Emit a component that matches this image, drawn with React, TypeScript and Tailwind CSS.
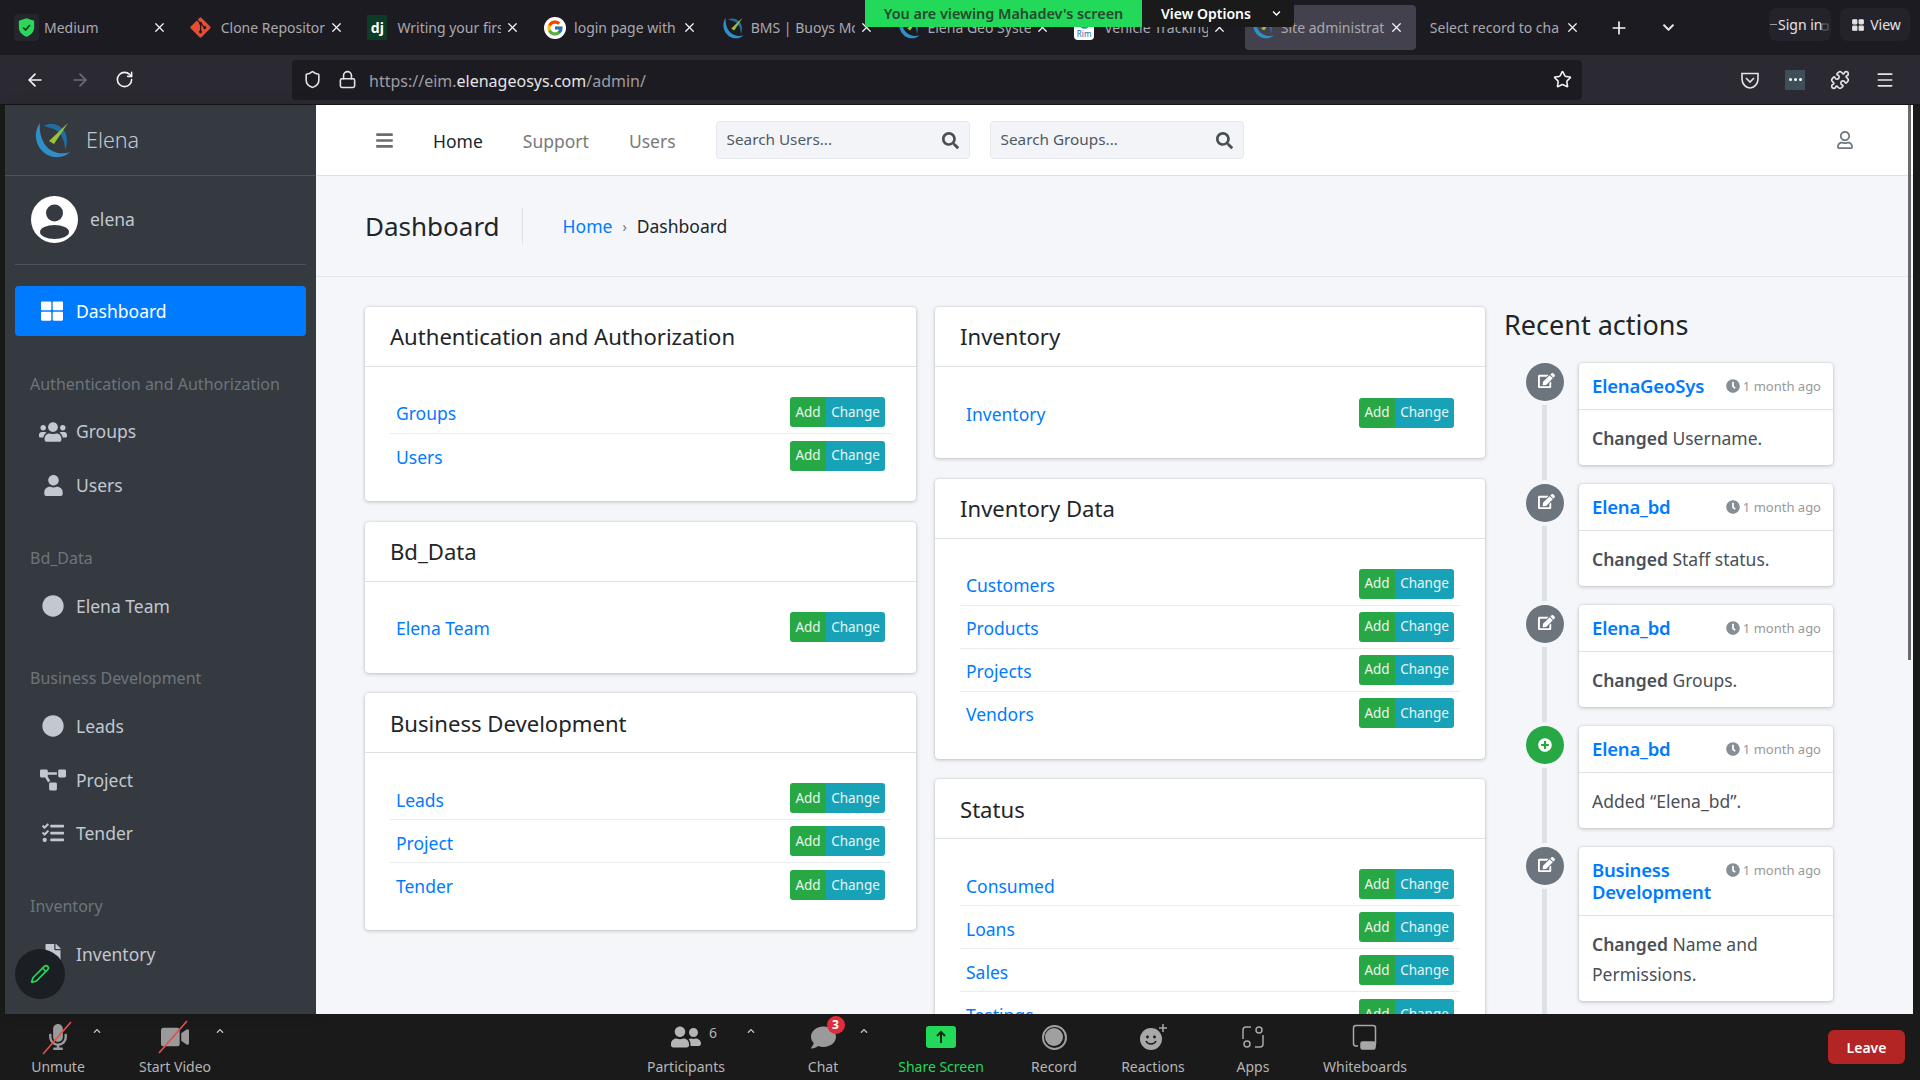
import type { ReactNode } from 'react'
import {
  FaBars, FaChevronDown, FaChevronUp, FaCircle, FaClock, FaComment, FaEdit, FaFile, FaGitAlt, FaMicrophone,
  FaPlusCircle, FaProjectDiagram, FaRegUser, FaSearch, FaTasks, FaThLarge, FaUser, FaUsers,
  FaUserFriends, FaVideo,
} from 'react-icons/fa'
import { FcGoogle } from 'react-icons/fc'
import { ArrowLeft, ArrowRight, LayoutGrid, Lock, Menu, Pencil, Plus, Puzzle, RotateCw, Shield, Square, Star, X } from 'lucide-react'

const font = "font-['Noto_Sans',sans-serif]"

function ElenaLogo({ size = 22 }: { size?: number }) {
  return (
    <svg width={size} height={size} viewBox="0 0 40 40" fill="none">
      <path d="M8 3 C1 12 3 27 14 34 C22 39 32 38 38 32 C30 35 20 33 14 26 C9 20 7 10 8 3Z" fill="#2f8fc6" />
      <path d="M12 6 C18 2 28 4 33 12 C36 18 35 26 33 30 C33 22 30 14 24 10 C20 8 15 7 12 6Z" fill="#1d6fa5" />
      <path d="M36 3 L17 21 L22 24Z" fill="#9cc03a" />
    </svg>
  )
}

function Favicon({ kind }: { kind: string }) {
  if (kind === 'shield')
    return (
      <div className="flex h-[27px] w-[25px] items-center justify-center rounded bg-[#24262b]">
        <svg width="17" height="19" viewBox="0 0 20 22">
          <path d="M10 0 L19 3 V11 C19 16 15 20 10 22 C5 20 1 16 1 11 V3Z" fill="#2bd65a" />
          <path d="M6 11 L9 14 L14 8" stroke="#14361f" strokeWidth="2" fill="none" />
        </svg>
      </div>
    )
  if (kind === 'git') return <FaGitAlt className="ml-[-2px] text-[23px] text-[#e84d31]" />
  if (kind === 'dj')
    return (
      <div className="flex h-[25px] w-[20px] items-center justify-center bg-[#0c3c26] text-[14px] font-bold text-white">dj</div>
    )
  if (kind === 'google')
    return (
      <div className="flex h-[22px] w-[22px] items-center justify-center rounded-full bg-white">
        <FcGoogle className="text-[18px]" />
      </div>
    )
  if (kind === 'vehicle')
    return (
      <div className="flex h-[24px] w-[20px] flex-col items-center justify-center rounded-sm bg-white">
        <FaCircle className="text-[11px] text-[#2f8fc6]" />
        <div className="text-[8px] leading-[9px] text-[#1d6fa5]">Rim</div>
      </div>
    )
  return <ElenaLogo size={24} />
}

const tabs = [
  { title: 'Medium', icon: 'shield' },
  { title: 'Clone Repository', icon: 'git' },
  { title: 'Writing your first', icon: 'dj' },
  { title: 'login page with', icon: 'google' },
  { title: 'BMS | Buoys Mon', icon: 'elena' },
  { title: 'Elena Geo Syste', icon: 'elena' },
  { title: 'Vehicle Tracking', icon: 'vehicle' },
  { title: 'Site administrat', icon: 'elena', active: true },
]

function BrowserTabs() {
  return (
    <div className={`relative flex h-[55px] shrink-0 items-center bg-[#1c1b22] pl-[8px] ${font}`}>
      <div className="flex gap-[5.7px]">
        {tabs.map((tab) => (
          <div
            key={tab.title}
            className={`flex h-[45px] w-[171px] items-center rounded-[4px] pl-[6px] pr-[12px] ${tab.active ? 'bg-[#42414d]' : ''}`}
          >
            <div className="flex w-[30px] shrink-0 items-center">
              <Favicon kind={tab.icon} />
            </div>
            <span className="w-[104px] overflow-hidden whitespace-nowrap text-[14px] text-[#a9a9ae]">{tab.title}</span>
            <X size={15} className="ml-auto text-[#f4f4f5]" />
          </div>
        ))}
      </div>
      <div className="ml-[14px] flex w-[150px] items-center">
        <span className="w-[129px] overflow-hidden whitespace-nowrap text-[14px] text-[#a9a9ae]">Select record to cha</span>
        <X size={15} className="ml-auto text-[#f4f4f5]" />
      </div>
      <Plus size={20} className="ml-[29px] text-[#f4f4f5]" />
      <FaChevronDown className="ml-[33px] text-[13px] text-[#e4e4e6]" />
      <div className="ml-auto mr-[10px] flex items-center gap-[9px] pb-[6px] text-[14px] text-[#e4e4e6]">
        <span className="flex h-[33px] w-[62px] items-center rounded-[8px] bg-[#24232c] pl-[1px]">
          <span className="mr-[1px] h-[1px] w-[7px] bg-[#9a9a9e]" />
          Sign in
          <Square size={8} className="ml-[-1px] mt-[4px] shrink-0 text-[#8c8c90]" />
        </span>
        <span className="flex h-[33px] w-[70px] items-center justify-center gap-[5px] rounded-[8px] bg-[#24232c] pl-[2px]">
          <LayoutGrid size={14} className="fill-[#e4e4e6]" />
          View
        </span>
      </div>

      {/* meeting banner that zoom puts over the tabs */}
      <div className="absolute left-[865px] top-0 flex h-[27px] items-center text-[14px] font-semibold">
        <div className="flex h-full w-[277px] items-center justify-center rounded-bl-[3px] bg-[#23d959] text-[14.4px] text-[#244a30]">
          You are viewing Mahadev's screen
        </div>
        <div className="flex h-full w-[152px] items-center rounded-br-[3px] bg-[#1a1a1a] pl-[19px] text-white">
          View Options
          <FaChevronDown className="ml-[21px] text-[9px]" />
        </div>
      </div>
    </div>
  )
}

function BrowserToolbar() {
  return (
    <div className={`flex h-[50px] shrink-0 items-center border-b border-[#16151b] bg-[#2b2a33] ${font}`}>
      <div className="flex w-[292px] items-center gap-[25px] pl-[25px]">
        <ArrowLeft size={20} className="text-[#f4f4f5]" />
        <ArrowRight size={20} className="text-[#6f6e75]" />
        <RotateCw size={19} className="text-[#f4f4f5]" />
      </div>
      <div className="flex h-[40px] w-[1290px] items-center rounded-[4px] bg-[#1c1b22] pl-[11px] pr-[10px]">
        <Shield size={19} className="text-[#e4e4e6]" />
        <Lock size={19} className="ml-[16px] text-[#e4e4e6]" />
        <span className="ml-[12px] mt-[2px] text-[16px] text-[#9d9da2]">
          https://eim.<span className="text-[#e4e4e6]">elenageosys.com</span>/admin/
        </span>
        <Star size={19} className="ml-auto text-[#f4f4f5]" />
      </div>
      <div className="flex flex-1 items-center justify-end gap-[25px] pr-[25px]">
        <svg width="20" height="20" viewBox="0 0 20 20" fill="none" stroke="#e4e4e6" strokeWidth="1.6">
          <path d="M2 3.5 H18 V9 C18 14 14 18 10 18 C6 18 2 14 2 9Z" />
          <path d="M6 8 L10 12 L14 8" />
        </svg>
        <div className="flex h-[20px] w-[20px] items-center justify-center gap-[2px] bg-[#3f4f5a]">
          <span className="h-[3px] w-[3px] rounded-full bg-white" />
          <span className="h-[3px] w-[3px] rounded-full bg-white" />
          <span className="h-[3px] w-[3px] rounded-full bg-white" />
        </div>
        <Puzzle size={20} className="text-[#e4e4e6]" />
        <Menu size={20} className="text-[#e4e4e6]" />
      </div>
    </div>
  )
}

type NavItem = { label: string; icon: ReactNode }

const navSections: { title: string; items: NavItem[] }[] = [
  {
    title: 'Authentication and Authorization',
    items: [
      { label: 'Groups', icon: <FaUsers className="text-[28px]" /> },
      { label: 'Users', icon: <FaUser className="text-[21px]" /> },
    ],
  },
  { title: 'Bd_Data', items: [{ label: 'Elena Team', icon: <FaCircle className="text-[22px]" /> }] },
  {
    title: 'Business Development',
    items: [
      { label: 'Leads', icon: <FaCircle className="text-[22px]" /> },
      { label: 'Project', icon: <FaProjectDiagram className="text-[26px]" /> },
      { label: 'Tender', icon: <FaTasks className="text-[22px]" /> },
    ],
  },
  { title: 'Inventory', items: [{ label: 'Inventory', icon: <FaFile className="text-[20px]" /> }] },
]

function Sidebar() {
  return (
    <aside className="relative flex w-[311px] shrink-0 flex-col overflow-hidden bg-[#343a40] shadow-[4px_0_12px_rgba(0,0,0,0.18)]">
      <div className="flex h-[71px] shrink-0 items-center gap-[14px] border-b border-[#4b545c] pl-[27px]">
        <ElenaLogo size={40} />
        <span className="text-[21.5px] font-light text-[#c2c7d0]">Elena</span>
      </div>
      <div className="mx-[10px] flex h-[89px] shrink-0 items-center gap-[12px] border-b border-[#4b545c] pb-[2px] pl-[16px]">
        <svg width="47" height="47" viewBox="0 0 47 47">
          <defs>
            <clipPath id="avatar-disc">
              <circle cx="23.5" cy="23.5" r="23.5" />
            </clipPath>
          </defs>
          <circle cx="23.5" cy="23.5" r="23.5" fill="#ffffff" />
          <g clipPath="url(#avatar-disc)" fill="#343a40">
            <circle cx="23.5" cy="17" r="8.5" />
            <ellipse cx="23.5" cy="36" rx="14.5" ry="7" />
          </g>
        </svg>
        <span className="text-[17.5px] text-[#c2c7d0]">elena</span>
      </div>
      <nav className="mt-[21px] px-[10px]">
        <div className="flex h-[50px] items-center rounded-[4px] bg-[#007bff] pl-[26px] text-white">
          <FaThLarge className="text-[22px]" />
          <span className="ml-[13px] text-[17.5px]">Dashboard</span>
        </div>
        {navSections.map((section) => (
          <div key={section.title} className="mt-[35.6px]">
            <div className="mb-[11px] flex h-[24px] items-center whitespace-nowrap pl-[15px] text-[16px] text-[#6c757d]">
              {section.title}
            </div>
            <div className="flex flex-col gap-[3.5px]">
              {section.items.map((item) => (
                <div key={item.label} className="flex h-[50px] items-center text-[#c2c7d0]">
                  <div className="flex w-[61px] shrink-0 justify-center pl-[15px]">{item.icon}</div>
                  <span className="text-[17.5px]">{item.label}</span>
                </div>
              ))}
            </div>
          </div>
        ))}
      </nav>
      <div className="absolute left-[10px] top-[844px] flex h-[50px] w-[50px] items-center justify-center rounded-full bg-[#1b1e22]">
        <Pencil size={20} className="text-[#23d959]" />
      </div>
    </aside>
  )
}

function Navbar() {
  return (
    <div className="flex h-[71px] shrink-0 items-center border-b border-[#dee2e6] bg-white pl-[59px] pr-[59px]">
      <FaBars className="text-[19px] text-[#6c6c6c]" />
      <span className="ml-[39px] pt-[2px] text-[17.5px] text-[#212529]">Home</span>
      <span className="ml-[40px] pt-[2px] text-[17.5px] text-[#7a7a7a]">Support</span>
      <span className="ml-[40px] pt-[2px] text-[17.5px] text-[#7a7a7a]">Users</span>
      <SearchBox placeholder="Search Users..." className="ml-[40px]" />
      <SearchBox placeholder="Search Groups..." className="ml-[20px]" />
      <FaRegUser className="ml-auto text-[18px] text-[#6c757d]" />
    </div>
  )
}

function SearchBox({ placeholder, className }: { placeholder: string; className: string }) {
  return (
    <div className={`flex h-[38px] w-[254px] items-center rounded-[4px] border border-[#e5e7ec] bg-[#f2f4f8] pl-[10px] pr-[10px] ${className}`}>
      <span className="pb-[1px] text-[15.3px] text-[#4f5963]">{placeholder}</span>
      <FaSearch className="ml-auto text-[17px] text-[#494f55]" />
    </div>
  )
}

function PageHeader() {
  return (
    <div className="flex h-[101px] shrink-0 items-center border-b border-[#e4e6ea] pl-[49px]">
      <h1 className="flex h-[36px] items-center border-r border-[#dee2e6] pr-[22px] text-[26px] text-[#212529]">Dashboard</h1>
      <span className="ml-[40px] text-[17.5px] text-[#007bff]">Home</span>
      <span className="ml-[10px] text-[14px] text-[#6c757d]">›</span>
      <span className="ml-[10px] text-[17.5px] text-[#212529]">Dashboard</span>
    </div>
  )
}

function ModelCard({ title, rows }: { title: string; rows: string[] }) {
  return (
    <section className="rounded-[4px] bg-white shadow-[0_0_2px_rgba(0,0,0,0.13),0_1px_4px_rgba(0,0,0,0.2)]">
      <h2 className="flex h-[60px] items-center border-b border-[#dfe1e5] pl-[25px] pt-[1px] text-[22.1px] text-[#212529]">{title}</h2>
      <div className="px-[25px] py-[24px]">
        {rows.map((row, i) => (
          <div
            key={row}
            className={`flex h-[43px] items-center pl-[6px] pr-[6px] ${i < rows.length - 1 ? 'border-b border-[#e9ecef]' : ''}`}
          >
            <span className="pt-[3px] text-[17.5px] text-[#007bff]">{row}</span>
            <div className="ml-auto flex h-[30px] overflow-hidden rounded-[3px] text-[13.5px] text-white/90">
              <span className="flex w-[36px] items-center justify-center bg-[#28a745]">Add</span>
              <span className="flex w-[59px] items-center justify-center bg-[#17a2b8]">Change</span>
            </div>
          </div>
        ))}
      </div>
    </section>
  )
}

const actions = [
  { who: ['ElenaGeoSys'], bold: 'Changed', rest: ' Username.' },
  { who: ['Elena_bd'], bold: 'Changed', rest: ' Staff status.' },
  { who: ['Elena_bd'], bold: 'Changed', rest: ' Groups.' },
  { who: ['Elena_bd'], bold: '', rest: 'Added “Elena_bd”.', added: true },
  { who: ['Business', 'Development'], bold: 'Changed', rest: ' Name and Permissions.' },
]

function RecentActions() {
  return (
    <div className="w-[330px] shrink-0">
      <h2 className="flex h-[36px] items-center text-[27px] text-[#212529]">Recent actions</h2>
      <div className="relative mt-[20px] pl-[22px]">
        <div className="absolute bottom-[-100px] left-[38px] top-0 w-[5px] bg-[#dee2e6]" />
        {actions.map((action, i) => (
          <div key={i} className="relative mb-[19px] flex items-start">
            <div
              className={`z-10 flex h-[38px] w-[38px] shrink-0 items-center justify-center rounded-full shadow-[0_0_0_4px_#f4f6f9] ${action.added ? 'bg-[#28a745]' : 'bg-[#6c757d]'}`}
            >
              {action.added ? <FaPlusCircle className="text-[14px] text-white" /> : <FaEdit className="ml-[2px] mt-[-4px] text-[17px] text-white" />}
            </div>
            <div className="ml-[15px] w-[254px] rounded-[4px] bg-white shadow-[0_0_2px_rgba(0,0,0,0.13),0_1px_4px_rgba(0,0,0,0.2)]">
              <div className="flex items-start justify-between border-b border-[#dfe1e5] pb-[12px] pl-[13px] pr-[12px] pt-[12px]">
                <div className="text-[18.5px] font-semibold leading-[22px] tracking-[-0.01em] text-[#007bff]">
                  {action.who.map((line) => (
                    <div key={line}>{line}</div>
                  ))}
                </div>
                <div className="flex items-center gap-[3px] whitespace-nowrap text-[13px] leading-[22px] text-[#999999]">
                  <FaClock className="text-[14px] text-[#868e96]" />
                  1 month ago
                </div>
              </div>
              <div className="px-[13px] pb-[12.5px] pt-[12.5px] text-[17.5px] leading-[30px] text-[#495057]">
                {action.bold && <b className="font-semibold">{action.bold}</b>}
                {action.rest}
              </div>
            </div>
          </div>
        ))}
      </div>
    </div>
  )
}

function Content() {
  return (
    <div className="flex flex-1 gap-[19px] overflow-hidden pl-[49px] pt-[30px]">
      <div className="flex w-[551px] shrink-0 flex-col gap-[20.6px]">
        <ModelCard title="Authentication and Authorization" rows={['Groups', 'Users']} />
        <ModelCard title="Bd_Data" rows={['Elena Team']} />
        <ModelCard title="Business Development" rows={['Leads', 'Project', 'Tender']} />
      </div>
      <div className="flex w-[550px] shrink-0 flex-col gap-[20.6px]">
        <ModelCard title="Inventory" rows={['Inventory']} />
        <ModelCard title="Inventory Data" rows={['Customers', 'Products', 'Projects', 'Vendors']} />
        <ModelCard title="Status" rows={['Consumed', 'Loans', 'Sales', 'Testings']} />
      </div>
      <RecentActions />
    </div>
  )
}

function ZoomItem({ label, icon, green, width }: { label: string; icon: ReactNode; green?: boolean; width: string }) {
  return (
    <div className={`flex flex-col items-center ${width}`}>
      <div className="flex h-[37px] items-center justify-center">{icon}</div>
      <span className={`mt-[2px] text-[14px] leading-[18px] ${green ? 'text-[#23d959]' : 'text-[#b5b5b5]'}`}>{label}</span>
    </div>
  )
}

function Slashed({ children }: { children: ReactNode }) {
  return (
    <div className="relative flex items-center justify-center">
      {children}
      <svg className="absolute left-[-6px] top-[-4px]" width="36" height="36" viewBox="0 0 36 36">
        <path d="M4 34 L32 2" stroke="#e2504b" strokeWidth="1.6" />
      </svg>
    </div>
  )
}

function ZoomBar() {
  const caret = <FaChevronUp className="mt-[-20px] text-[8px] text-[#c4c4c4]" />
  return (
    <div className={`flex h-[66px] shrink-0 items-center bg-[#1a1a1a] ${font}`}>
      <ZoomItem
        width="w-[90px] ml-[13px]"
        label="Unmute"
        icon={
          <Slashed>
            <FaMicrophone className="text-[26px] text-[#9a9a9a]" />
          </Slashed>
        }
      />
      <div className="ml-[-10px]">{caret}</div>
      <ZoomItem
        width="w-[100px] ml-[24px]"
        label="Start Video"
        icon={
          <Slashed>
            <FaVideo className="text-[28px] text-[#9a9a9a]" />
          </Slashed>
        }
      />
      <div className="ml-[-9px]">{caret}</div>
      <ZoomItem
        width="w-[110px] ml-[407px]"
        label="Participants"
        icon={
          <div className="ml-[16px] flex items-start gap-[8px]">
            <FaUserFriends className="text-[30px] text-[#b5b5b5]" />
            <span className="mt-[2px] text-[14px] leading-[18px] text-[#b5b5b5]">6</span>
          </div>
        }
      />
      <div className="ml-[6px]">{caret}</div>
      <ZoomItem
        width="w-[70px] ml-[33px]"
        label="Chat"
        icon={
          <div className="relative">
            <FaComment className="text-[25px] text-[#9a9a9a]" />
            <span className="absolute left-[16px] top-[-9px] flex h-[18px] w-[18px] items-center justify-center rounded-full bg-[#e02d3c] text-[12px] font-bold text-white">
              3
            </span>
          </div>
        }
      />
      <div className="ml-[2px]">{caret}</div>
      <ZoomItem
        width="w-[110px] ml-[18px]"
        green
        label="Share Screen"
        icon={
          <div className="flex h-[22px] w-[30px] items-center justify-center rounded-[3px] bg-[#23d959]">
            <svg width="12" height="14" viewBox="0 0 12 14" fill="none" stroke="#0c2a14" strokeWidth="2">
              <path d="M6 13 V2 M2 6 L6 2 L10 6" />
            </svg>
          </div>
        }
      />
      <ZoomItem
        width="w-[90px] ml-[13px]"
        label="Record"
        icon={
          <div className="flex h-[25px] w-[25px] items-center justify-center rounded-full border-2 border-[#a0a0a0]">
            <div className="h-[18px] w-[18px] rounded-full bg-[#a0a0a0]" />
          </div>
        }
      />
      <ZoomItem
        width="w-[100px] ml-[4px]"
        label="Reactions"
        icon={
          <svg width="28" height="28" viewBox="0 0 28 28">
            <circle cx="12" cy="16" r="11" fill="#a8a8a8" />
            <circle cx="8.5" cy="14" r="1.4" fill="#1a1a1a" />
            <circle cx="15.5" cy="14" r="1.4" fill="#1a1a1a" />
            <path d="M7 18 C9 22 15 22 17 18" stroke="#1a1a1a" strokeWidth="1.5" fill="none" />
            <path d="M24 1 V9 M20 5 H28" stroke="#a8a8a8" strokeWidth="1.5" />
          </svg>
        }
      />
      <ZoomItem
        width="w-[80px] ml-[10px]"
        label="Apps"
        icon={
          <svg width="24" height="24" viewBox="0 0 24 24" fill="none" stroke="#a8a8a8" strokeWidth="1.5">
            <path d="M2 14 V5 C2 3 3 2 5 2 H10" />
            <path d="M22 10 V19 C22 21 21 22 19 22 H14" />
            <circle cx="18" cy="5" r="3" />
            <circle cx="6" cy="19" r="3" />
          </svg>
        }
      />
      <ZoomItem
        width="w-[110px] ml-[17px]"
        label="Whiteboards"
        icon={
          <svg width="26" height="26" viewBox="0 0 26 26" fill="none" stroke="#a8a8a8" strokeWidth="1.5">
            <path d="M6 22 H4 C2.5 22 1.5 21 1.5 19.5 V4 C1.5 2.5 2.5 1.5 4 1.5 H21 C22.5 1.5 23.5 2.5 23.5 4 V19.5 C23.5 21 22.5 22 21 22" />
            <rect x="9" y="18" width="14" height="7" rx="1.5" fill="#a8a8a8" />
          </svg>
        }
      />
      <div className="ml-auto mr-[15px] flex h-[34px] w-[77px] items-center justify-center rounded-[6px] bg-[#b32424] text-[14px] font-semibold text-white">
        Leave
      </div>
    </div>
  )
}

export default function App() {
  return (
    <div className={`flex h-[1080px] w-[1920px] flex-col overflow-hidden bg-[#1a1a1a] ${font}`}>
      <BrowserTabs />
      <BrowserToolbar />
      <div className="flex min-h-0 flex-1 px-[5px] pr-[7px]">
        <Sidebar />
        <main className="relative flex min-w-0 flex-1 flex-col bg-[#f4f6f9]">
          <Navbar />
          <PageHeader />
          <Content />
          {/* page scrollbar */}
          <div className="absolute right-[2px] top-0 h-[555px] w-[3px] bg-[#6b6b6b]" />
        </main>
      </div>
      <ZoomBar />
    </div>
  )
}
